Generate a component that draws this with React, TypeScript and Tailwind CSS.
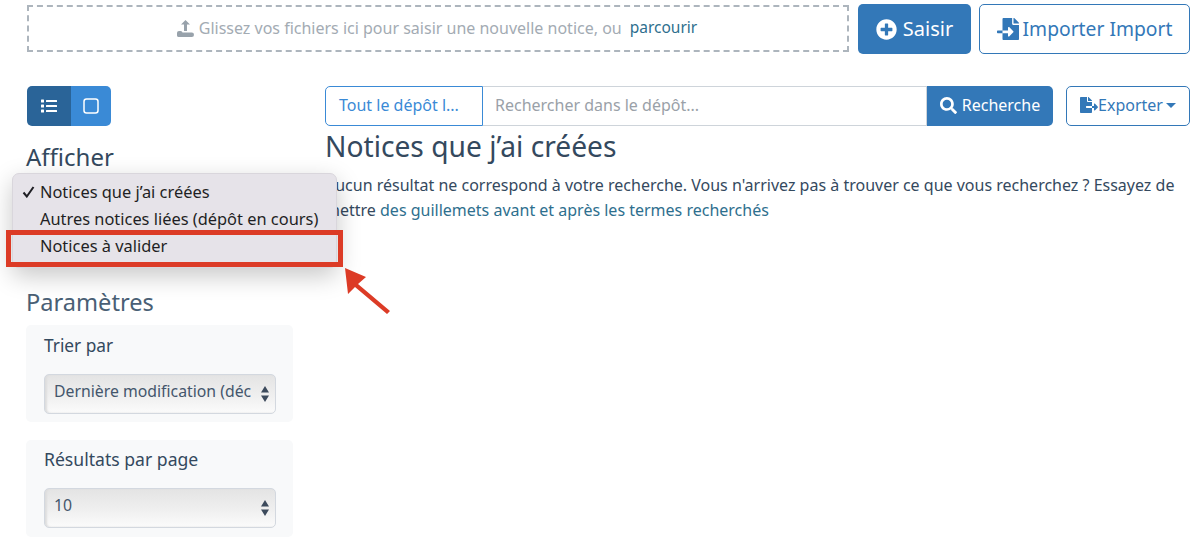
import { FaFileExport, FaFileImport, FaList, FaPlusCircle, FaSearch } from "react-icons/fa";

const SelectBox = ({ value }: { value: string }) => {
  return (
    <div className="mt-[16px] flex h-10 w-[232px] items-center justify-between rounded-[5px] border border-[#d3d8df] bg-gradient-to-b from-[#e4e4e4] via-[#eeeeee] to-[#fbfbfb] pl-[9px] pr-[6px] text-[#44566c] shadow-[inset_2px_0_2px_#dddddd]">
      <span className="pb-[4px] text-[15.8px] whitespace-nowrap">{value}</span>
      <svg width="8" height="16" viewBox="0 0 8 16" className="shrink-0 text-[#3c4a5c]">
        <path d="M4 0 L8 6.5 H0 Z M4 16 L8 9.5 H0 Z" fill="currentColor" />
      </svg>
    </div>
  );
};

const App = () => {
  return (
    <div className="relative h-[554px] w-[1202px] overflow-hidden bg-white font-['Noto_Sans',sans-serif] text-[#34495e]">
      {/* barre du haut */}
      <div className="flex items-start pl-[27px] pt-1">
        <div className="mt-px flex h-[47px] w-[822px] items-center justify-center border-2 border-dashed border-[#adb5bd] pb-px pr-[2px] text-[16px] text-[#a3abb3]">
          <svg width="17" height="17" viewBox="0 0 17 17" className="mr-[5px] text-[#98a2ab]">
            <path d="M8.5 0 L13 4.6 H10 V11 H7 V4.6 H4 Z" fill="currentColor" />
            <rect x="0" y="11" width="5.5" height="6" rx="2" fill="currentColor" />
            <rect x="0" y="12.5" width="17" height="4.5" rx="2.2" fill="currentColor" />
          </svg>
          <span>Glissez vos fichiers ici pour saisir une nouvelle notice, ou</span>
          <span className="ml-[8px] text-[15.5px] text-[#2e6f8e]">parcourir</span>
        </div>
        <button className="ml-[9px] flex h-[50px] w-[113px] items-center justify-center gap-[6px] rounded-[5px] bg-[#3378b8] text-[20px] text-white">
          <FaPlusCircle className="text-[21px]" />
          Saisir
        </button>
        <button className="ml-2 flex h-[50px] w-[211px] items-center justify-center gap-[4px] rounded-[5px] border border-[#3378b8] bg-white text-[19.3px] text-[#3378b8]">
          <FaFileImport className="text-[22px]" />
          Importer Import
        </button>
      </div>

      <div className="mt-8 flex pl-[27px]">
        {/* colonne gauche */}
        <div className="-ml-[1px] w-[299px] shrink-0">
          <div className="ml-[0.5px] flex h-10 w-[84px] overflow-hidden rounded-[5px] text-white">
            <div className="flex w-11 items-center justify-center bg-[#2a6498]">
              <FaList className="text-[16px]" />
            </div>
            <div className="flex w-10 items-center justify-center bg-[#3a8ad6]">
              <svg width="16" height="16" viewBox="0 0 16 16">
                <rect x="1" y="1" width="14" height="14" rx="2.5" fill="none" stroke="currentColor" strokeWidth="1.5" />
              </svg>
            </div>
          </div>
          <h2 className="mt-[13px] text-[24px] leading-[36px]">Afficher</h2>
          <h2 className="mt-[109px] text-[23.6px] leading-[36px] text-[#4a5f75]">Paramètres</h2>
          <div className="mt-[5px] h-[97px] w-[267px] rounded-[5px] bg-[#f8f9fa] pl-[18px] pt-[9px]">
            <div className="text-[17.3px] leading-[24px]">Trier par</div>
            <SelectBox value="Dernière modification (déc" />
          </div>
          <div className="mt-[18px] h-[97px] w-[267px] rounded-[5px] bg-[#f8f9fa] pl-[18px] pt-[7px]">
            <div className="pb-px text-[17.6px] leading-[24px]">Résultats par page</div>
            <SelectBox value="10" />
          </div>
        </div>

        {/* colonne principale */}
        <div className="w-[865px] shrink-0">
          <div className="flex items-start">
            <div className="flex h-10 w-[728px]">
              <button className="flex h-10 w-[158px] shrink-0 items-center justify-start rounded-l-[5px] border border-[#3a8ad6] pb-[2px] pl-[13px] text-[16px] text-[#3a8ad6]">
                Tout le dépôt l...
              </button>
              <div className="flex flex-1 items-center border-y border-r border-[#ced4da] pb-[2px] pl-3 text-[16px] text-[#9aa1a8]">
                Rechercher dans le dépôt...
              </div>
              <button className="flex w-[126px] shrink-0 items-center justify-center gap-[5px] rounded-r-[5px] bg-[#3378b8] pb-[2px] text-[16px] text-white">
                <FaSearch className="text-[17px]" />
                Recherche
              </button>
            </div>
            <button className="ml-[13px] flex h-10 w-[124px] items-center justify-center rounded-[5px] border border-[#3378b8] pb-[2px] text-[16px] text-[#3378b8]">
              <FaFileExport className="text-[18px]" />
              Exporter
              <span className="ml-[3px] h-0 w-0 border-x-[5px] border-t-[5px] border-x-transparent border-t-[#3378b8]" />
            </button>
          </div>
          <h1 className="text-[28.2px] leading-[40px] text-[#34495e]">Notices que j’ai créées</h1>
          <p className="mt-[7px] text-[16px] leading-[25px]">
            Aucun résultat ne correspond à votre recherche. Vous n'arrivez pas à trouver ce que vous recherchez ? Essayez de
            <br />
            mettre <span className="text-[#2e6f8e]">des guillemets avant et après les termes recherchés</span>
          </p>
        </div>
      </div>

      {/* menu déroulant ouvert */}
      <div className="absolute left-3 top-[173px] h-[95px] w-[325px] rounded-[7px] border border-[#d9d6dc] bg-[#e6e3e9] pt-[4px] text-[16.4px] leading-[27px] text-[#1f1f24] shadow-[0_8px_24px_rgba(0,0,0,0.22)]">
        <div className="flex items-center pl-[9px]">
          <svg width="13" height="12" viewBox="0 0 13 12" className="mr-[5px] shrink-0">
            <path d="M1.5 6.5 L4.8 10.5 L11.5 1" fill="none" stroke="currentColor" strokeWidth="2" />
          </svg>
          Notices que j’ai créées
        </div>
        <div className="pl-[27px]">Autres notices liées (dépôt en cours)</div>
        <div className="pl-[27px]">Notices à valider</div>
      </div>

      {/* annotation rouge */}
      <div className="absolute left-[6px] top-[230px] h-[37px] w-[337px] border-[5px] border-[#dc3b26]" />
      <svg className="absolute left-[340px] top-[264px]" width="54" height="52" viewBox="0 0 54 52">
        <path d="M5 4 L26 13 L18 20 L50 47 L47 50 L15 23 L8 30 Z" fill="#dc3b26" />
      </svg>
    </div>
  );
};

export default App;
